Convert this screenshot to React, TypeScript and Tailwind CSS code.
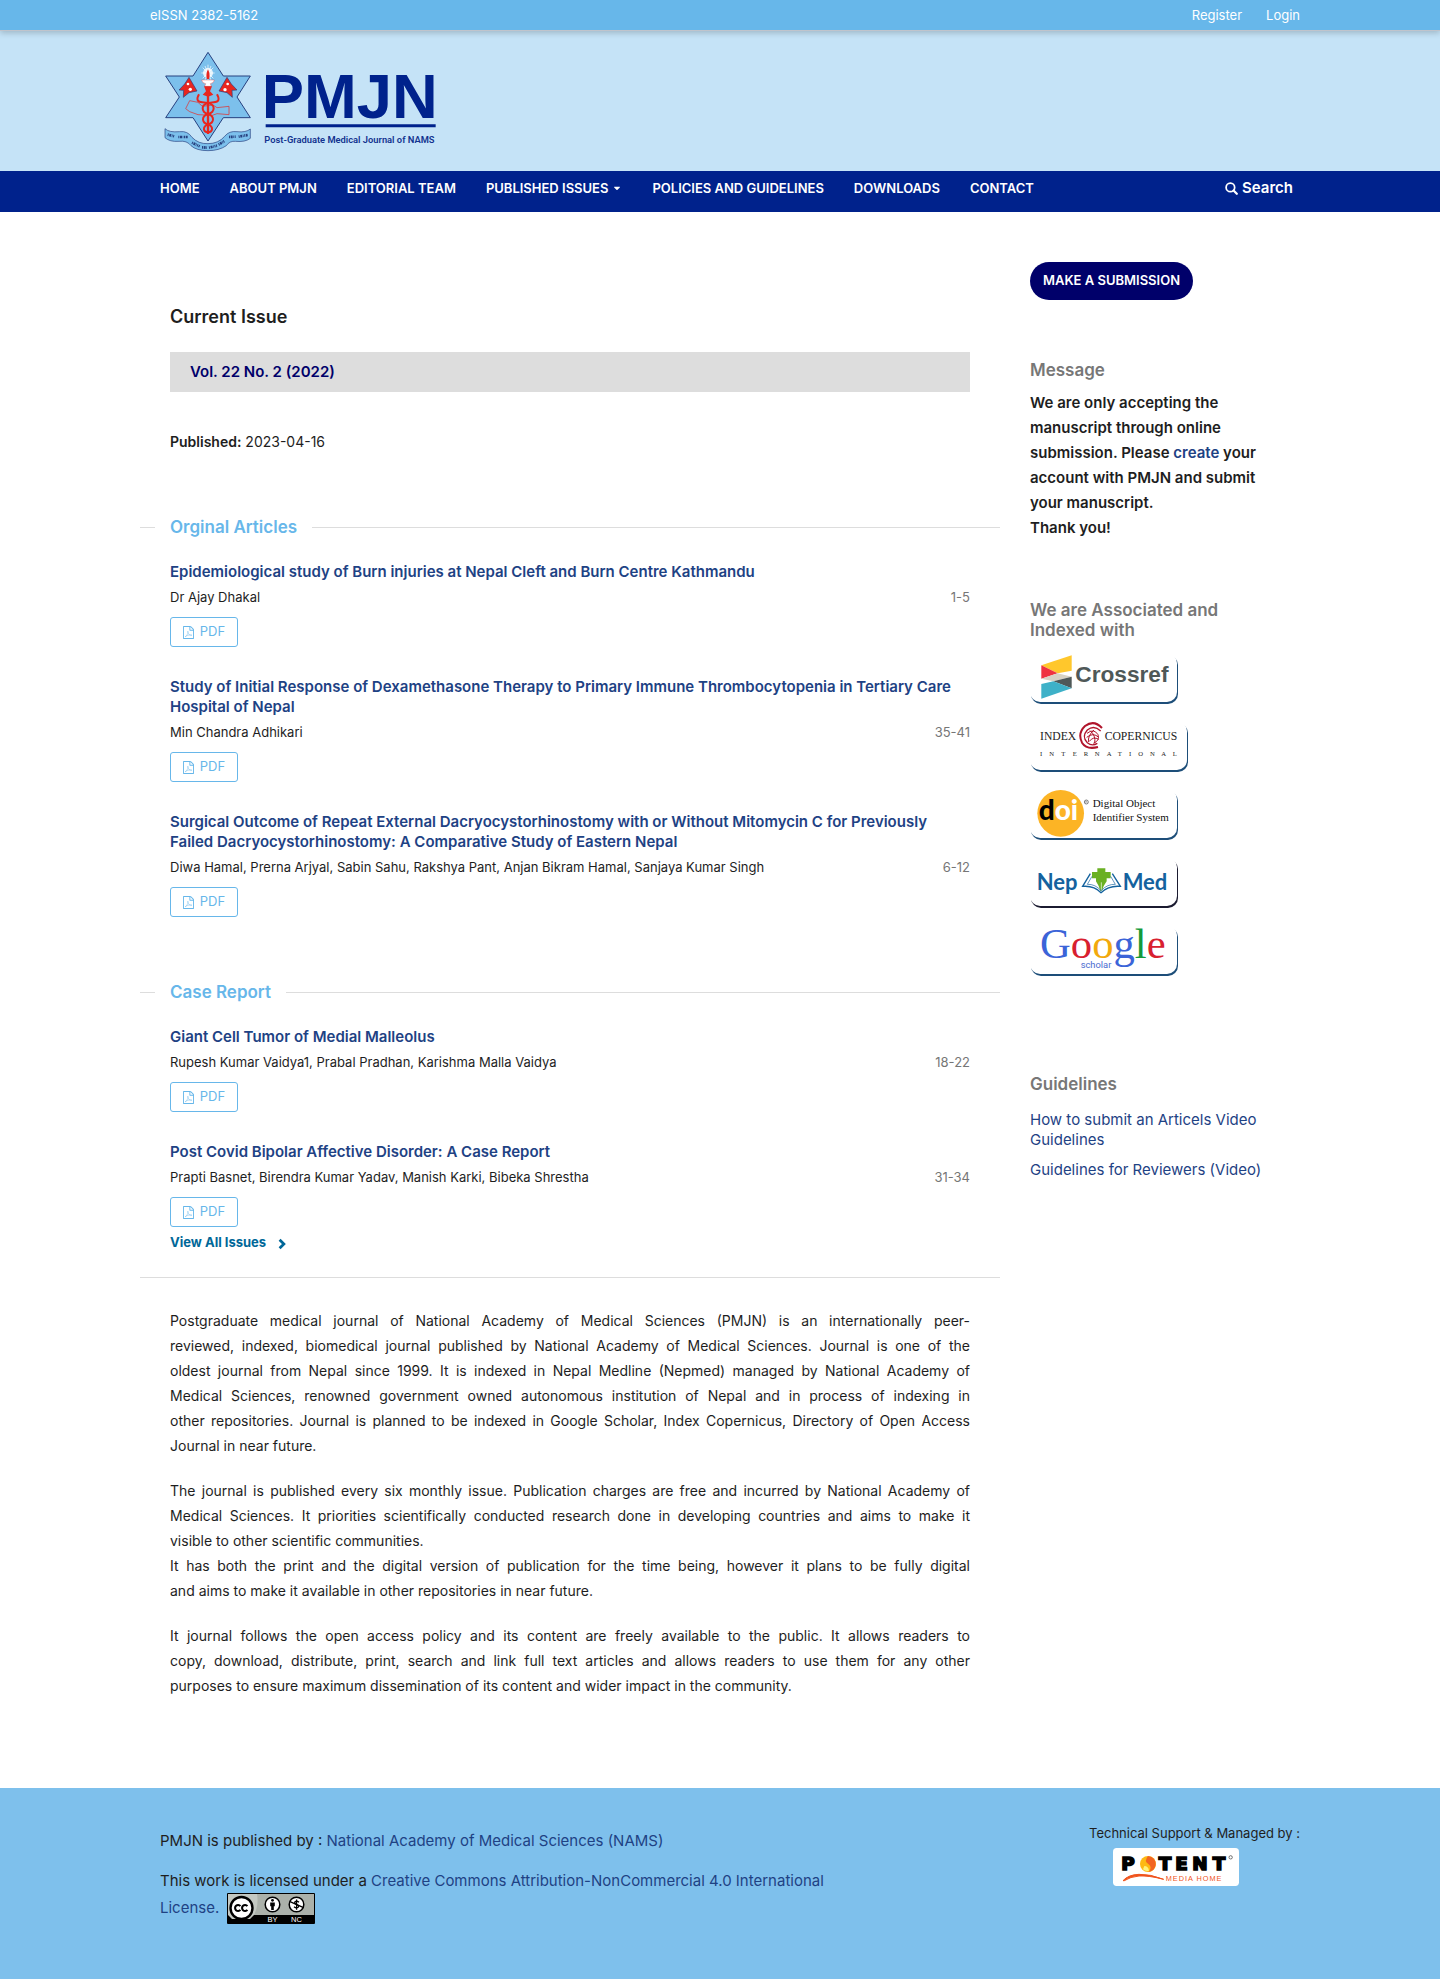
import React from "react";
import { FaCaretDown } from "react-icons/fa";

const navItems = [
  "Home",
  "About PMJN",
  "Editorial Team",
  "Published Issues",
  "Policies and Guidelines",
  "Downloads",
  "Contact",
];

type Article = { title: string; authors: string; pages: string };

const originals: Article[] = [
  {
    title: "Epidemiological study of Burn injuries at Nepal Cleft and Burn Centre Kathmandu",
    authors: "Dr Ajay Dhakal",
    pages: "1-5",
  },
  {
    title:
      "Study of Initial Response of Dexamethasone Therapy to Primary Immune Thrombocytopenia in Tertiary Care Hospital of Nepal",
    authors: "Min Chandra Adhikari",
    pages: "35-41",
  },
  {
    title:
      "Surgical Outcome of Repeat External Dacryocystorhinostomy with or Without Mitomycin C for Previously Failed Dacryocystorhinostomy: A Comparative Study of Eastern Nepal",
    authors:
      "Diwa Hamal, Prerna Arjyal, Sabin Sahu, Rakshya Pant, Anjan Bikram Hamal, Sanjaya Kumar Singh",
    pages: "6-12",
  },
];

const cases: Article[] = [
  {
    title: "Giant Cell Tumor of Medial Malleolus",
    authors: "Rupesh Kumar Vaidya1, Prabal Pradhan, Karishma Malla Vaidya",
    pages: "18-22",
  },
  {
    title: "Post Covid Bipolar Affective Disorder: A Case Report",
    authors: "Prapti Basnet, Birendra Kumar Yadav, Manish Karki, Bibeka Shrestha",
    pages: "31-34",
  },
];

const about: string[][] = [
  [
    "Postgraduate medical journal of National Academy of Medical Sciences (PMJN) is an internationally peer-",
    "reviewed, indexed, biomedical journal published by National Academy of Medical Sciences. Journal is one of the",
    "oldest journal from Nepal since 1999. It is indexed in Nepal Medline (Nepmed) managed by National Academy of",
    "Medical Sciences, renowned government owned autonomous institution of Nepal and in process of indexing in",
    "other repositories. Journal is planned to be indexed in Google Scholar, Index Copernicus, Directory of Open Access",
    "Journal in near future.",
  ],
  [
    "The journal is published every six monthly issue. Publication charges are free and incurred by National Academy of",
    "Medical Sciences. It priorities scientifically conducted research done in developing countries and aims to make it",
    "visible to other scientific communities.",
  ],
  [
    "It has both the print and the digital version of publication for the time being, however it plans to be fully digital",
    "and aims to make it available in other repositories in near future.",
  ],
  [
    "It journal follows the open access policy and its content are freely available to the public. It allows readers to",
    "copy, download, distribute, print, search and link full text articles and allows readers to use them for any other",
    "purposes to ensure maximum dissemination of its content and wider impact in the community.",
  ],
];

function SearchIcon() {
  return (
    <svg viewBox="0 0 14 14" className="size-[13px]" fill="none" stroke="currentColor" aria-hidden="true">
      <circle cx="5.8" cy="5.8" r="4.6" strokeWidth="1.9" />
      <path d="M9.2 9.2L12.7 12.7" strokeWidth="2.4" strokeLinecap="round" />
    </svg>
  );
}

function PdfIcon() {
  return (
    <svg viewBox="0 0 1536 1792" className="h-[13px] w-[11px]" fill="currentColor" aria-hidden="true">
      <path d="M1468 380q28 28 48 76t20 88v1152q0 40-28 68t-68 28H96q-40 0-68-28t-28-68V96q0-40 28-68T96 0h896q40 0 88 20t76 48zm-444-244v376h376q-10-29-22-41l-313-313q-12-12-41-22zm384 1528V640H992q-40 0-68-28t-28-68V128H128v1536h1280z" />
      <path
        d="M290 1500Q520 1380 660 1060Q740 860 690 700Q620 760 700 960Q800 1220 1020 1280Q1180 1330 1260 1270Q1160 1180 860 1240Q560 1290 290 1500Z"
        fill="none"
        stroke="currentColor"
        strokeWidth="60"
      />
    </svg>
  );
}

function ChevronIcon() {
  return (
    <svg viewBox="0 0 10 14" className="mt-1 h-3 w-2" fill="none" stroke="currentColor" aria-hidden="true">
      <path d="M2 1.6L7.4 7L2 12.4" strokeWidth="3.4" />
    </svg>
  );
}

function JournalLogo() {
  return (
    <svg viewBox="100 150 825 309" className="h-[103px] w-[275px]" role="img" aria-label="PMJN">
      <path
        d="M235 157L281 228H362L322 291L362 353H281L235 423L190 353H108L149 291L108 228H190Z"
        fill="#7cc0ec"
        stroke="#27407f"
        strokeWidth="3"
      />
      <circle cx="235" cy="219" r="15" fill="#fff" opacity="0.8" />
      <path
        d="M235 194V244M215 219H255M219 203L251 235M251 203L219 235M226 198L244 240M244 198L226 240"
        stroke="#fff"
        strokeWidth="2"
      />
      <path d="M235 208Q243 224 238 237H232Q227 224 235 208Z" fill="#e8261f" />
      <path d="M216 240H254Q252 250 242 251L245 259H225L228 251Q218 250 216 240Z" fill="#fff" stroke="#e8261f" strokeWidth="1" />
      <path
        d="M168 326L180 302L205 307L218 319L250 315L262 323L298 319V344L262 341L248 346L205 344L180 335Z"
        fill="none"
        stroke="#e8261f"
        strokeWidth="2"
      />
      <path d="M178 232L202 273L178 278L161 292L162 271L148 270L165 252Z" fill="#e8261f" stroke="#27407f" strokeWidth="2" />
      <path d="M292 232L268 273L292 278L308 292L307 271L322 270L305 252Z" fill="#e8261f" stroke="#27407f" strokeWidth="2" />
      <circle cx="175" cy="252" r="4" fill="#fff" />
      <circle cx="182" cy="268" r="5" fill="#fff" />
      <circle cx="294" cy="252" r="4" fill="#fff" />
      <circle cx="286" cy="269" r="5" fill="#fff" />
      <path d="M223 259H247L241 274L251 284L235 290L219 284L229 274Z" fill="#e8261f" />
      <path d="M235 280V402" stroke="#e8261f" strokeWidth="7" />
      <path
        d="M208 283Q195 306 218 307Q252 309 252 324Q252 338 235 342Q220 347 220 358Q220 370 235 373Q248 378 247 388Q246 396 235 397"
        fill="none"
        stroke="#e8261f"
        strokeWidth="6"
      />
      <path
        d="M262 283Q275 306 252 307Q219 309 219 324Q219 338 235 342Q250 347 250 358Q250 370 235 373Q222 378 223 388Q224 396 235 397"
        fill="none"
        stroke="#e8261f"
        strokeWidth="6"
      />
      <path
        d="M106 386Q118 398 150 395Q174 392 187 412Q206 432 235 431Q266 431 285 409Q298 392 322 395Q349 398 362 387V415Q346 427 318 424Q300 422 290 437Q268 452 235 452Q200 452 184 437Q172 421 148 424Q120 426 106 413Z"
        fill="#7cc0ec"
        stroke="#27407f"
        strokeWidth="2"
      />
      <path
        d="M114 404L134 409M146 411L176 411M187 428L210 439M217 442L232 443M238 443L262 437M267 434L284 423M298 411L318 410M327 410L354 405"
        fill="none"
        stroke="#27407f"
        strokeWidth="8"
        strokeDasharray="3 2 6 2 2 2"
      />
      <text
        x="396"
        y="353"
        fontSize="190"
        fontWeight="700"
        fontFamily="'Liberation Sans', sans-serif"
        fill="#00228c"
      >
        PMJN
      </text>
      <path d="M408 377H918" stroke="#00228c" strokeWidth="9" />
      <text
        x="404"
        y="429"
        fontSize="28"
        fontWeight="600"
        fontFamily="Roboto, sans-serif"
        fill="#12338f"
      >
        Post-Graduate Medical Journal of NAMS
      </text>
    </svg>
  );
}

function PublicationList({ heading, items }: { heading: string; items: Article[] }) {
  return (
    <section className="pb-11">
      <div className="flex h-5 items-center">
        <span className="h-px w-[15px] bg-[#dddddd]" />
        <h3 className="px-[15px] text-[17px] leading-5 font-semibold text-[#67b7ea]">{heading}</h3>
        <span className="h-px grow bg-[#dddddd]" />
      </div>
      <ul className="flex flex-col gap-[30px] px-[30px] pt-[25px]">
        {items.map((a) => (
          <li key={a.title}>
            <h4 className="text-[15px] leading-5 font-semibold text-[#1e4284]">
              <a href="#article">{a.title}</a>
            </h4>
            <div className="flex justify-between pt-[5px] text-[13px] leading-5">
              <span>{a.authors}</span>
              <span className="text-[#767676]">{a.pages}</span>
            </div>
            <a
              href="#pdf"
              className="mt-2.5 flex h-[30px] w-[68px] items-center justify-center gap-1.5 rounded-[3px] border border-[#67b7ea] text-[13px] text-[#67b7ea]"
            >
              <PdfIcon />
              PDF
            </a>
          </li>
        ))}
      </ul>
    </section>
  );
}

function Crossref() {
  return (
    <svg viewBox="60 37 441 147" className="h-[49px] w-[147px]" role="img" aria-label="Crossref">
      <path d="M94 74L185 44V90L143 98Z" fill="#ffc72c" />
      <path d="M94 74L143 98L94 114Z" fill="#ef3340" />
      <path d="M94 114L143 98L185 108L130 122Z" fill="#d8d2c4" />
      <path d="M185 108V143L130 122Z" fill="#4f5858" />
      <path d="M94 130L130 122L185 143L94 174Z" fill="#3eb1c8" />
      <text x="196" y="125" fontSize="68" fontWeight="700" fontFamily="'Liberation Sans', sans-serif" fill="#4f5858">
        Crossref
      </text>
    </svg>
  );
}

function IndexCopernicus() {
  return (
    <svg viewBox="60 241 471 147" className="h-[49px] w-[157px]" role="img" aria-label="Index Copernicus International">
      <g fontFamily="'Liberation Serif', serif" fill="#222">
        <text x="90" y="297" fontSize="35">INDEX</text>
        <text x="284" y="297" fontSize="35">COPERNICUS</text>
        <text x="90 118 154 188 221 254 290 323 357 385 420 454 488" y="345" fontSize="20">
          INTERNATIONAL
        </text>
      </g>
      <g fill="none" stroke="#b0142b">
        <path d="M276 262Q252 236 225 256Q202 278 216 306Q230 328 264 319" strokeWidth="6" />
        <path d="M272 271Q252 252 232 268Q214 288 232 306Q246 318 262 308" strokeWidth="4" />
        <path d="M231 278Q252 262 264 282Q270 300 250 308M230 290Q250 274 266 290M238 302Q250 286 266 296M240 270Q258 284 254 308M252 268Q232 286 236 304" strokeWidth="3" />
      </g>
    </svg>
  );
}

function Doi() {
  return (
    <svg viewBox="60 446 441 147" className="h-[49px] w-[147px]" role="img" aria-label="DOI">
      <circle cx="152" cy="519" r="70" fill="#fcb425" />
      <text x="86" y="539" fontSize="84" fontWeight="900" fontFamily="Lato, sans-serif" fill="#000">
        d<tspan fill="#fff">oi</tspan>
      </text>
      <circle cx="229" cy="485" r="6" fill="none" stroke="#444" strokeWidth="2" />
      <path d="M227 489V482H230V485L232 489" fill="none" stroke="#444" strokeWidth="1" />
      <g fontFamily="'Liberation Serif', serif" fontSize="33" fill="#111">
        <text x="248" y="500">Digital Object</text>
        <text x="248" y="543">Identifier System</text>
      </g>
    </svg>
  );
}

function NepMed() {
  return (
    <svg viewBox="60 170 441 147" className="h-[49px] w-[147px]" role="img" aria-label="NepMed">
      <g fontFamily="Lato, sans-serif" fontSize="66" fontWeight="700" fill="#14629e">
        <text x="80" y="269">Nep</text>
        <text x="338" y="269">Med</text>
      </g>
      <path d="M262 204H286V215H302V234H290V243L281 257L276 272H271L266 257L258 243V234H246V215H262Z" fill="#6ab023" />
      <path d="M274 246V272" stroke="#fff" strokeWidth="2" />
      <path d="M241 220L218 258Q252 255 273 277Q296 255 331 258L307 220" fill="none" stroke="#14629e" strokeWidth="4" />
      <path d="M246 228L232 252Q256 251 273 271Q292 251 316 252L302 228" fill="none" stroke="#14629e" strokeWidth="2" />
    </svg>
  );
}

function GoogleScholar() {
  return (
    <svg viewBox="60 374 441 147" className="h-[49px] w-[147px] overflow-visible" role="img" aria-label="Google Scholar">
      <text x="90" y="473" fontSize="128" fontFamily="'Liberation Serif', serif" fill="#3b64d8">
        G<tspan fill="#d8202f">o</tspan>
        <tspan fill="#f2a90c">o</tspan>
        <tspan fill="#3b64d8">g</tspan>
        <tspan fill="#129a3a">l</tspan>
        <tspan fill="#d8202f">e</tspan>
      </text>
      <text x="212" y="504" fontSize="28" fontFamily="Roboto, sans-serif" fill="#4a6bd0">
        scholar
      </text>
    </svg>
  );
}

function CcBadge() {
  return (
    <svg viewBox="0 0 88 31" className="ml-2 inline-block h-[31px] w-[88px] align-middle" role="img" aria-label="CC BY-NC">
      <rect width="88" height="31" rx="1" fill="#000" />
      <rect x="1" y="1" width="86" height="21" fill="#abb1aa" />
      <path d="M1 22V1H30Q32 12 27 22L23 26H5L1 22Z" fill="#c3c8c2" />
      <circle cx="14.5" cy="15" r="11" fill="#fff" stroke="#000" strokeWidth="2.4" />
      <path
        d="M13.4 13.1A3 3 0 1 0 13.4 16.9M20.4 13.1A3 3 0 1 0 20.4 16.9"
        fill="none"
        stroke="#000"
        strokeWidth="2.1"
      />
      <circle cx="45.5" cy="11.5" r="7.3" fill="#fff" stroke="#000" strokeWidth="1.5" />
      <circle cx="45.5" cy="7.3" r="1.4" />
      <path d="M43.2 9.4H47.8V13.2H46.8V17H44.2V13.2H43.2Z" />
      <circle cx="69.5" cy="11.5" r="7.3" fill="#fff" stroke="#000" strokeWidth="1.5" />
      <path
        d="M72 9.2Q69.5 7.3 67.8 9Q67.3 10.8 69.8 11.5Q72.5 12.6 71.2 14.2Q69.3 15.6 67 13.8M69.6 6.4V16.8"
        fill="none"
        stroke="#000"
        strokeWidth="1.3"
      />
      <path d="M63 8.6L76 14.4" stroke="#000" strokeWidth="1.3" />
      <g fontFamily="'Liberation Sans', sans-serif" fontSize="7.5" fill="#fff">
        <text x="40.5" y="29">BY</text>
        <text x="64" y="29">NC</text>
      </g>
    </svg>
  );
}

function PotentLogo() {
  return (
    <svg viewBox="156 204 378 114" className="h-[38px] w-[126px]" role="img" aria-label="Potent Media Home">
      <rect x="156" y="204" width="378" height="114" rx="11" fill="#fff" />
      <g fontFamily="'DejaVu Sans', sans-serif" fontWeight="700" fontSize="55" stroke="#000" strokeWidth="5">
        <text x="181" y="270">P</text>
        <text x="293 343 394 455" y="270">TENT</text>
      </g>
      <circle cx="261" cy="252" r="24" fill="#fdb913" />
      <path d="M261 228Q286 232 284 256Q280 274 262 276Q276 262 262 252Q248 244 261 228Z" fill="#f26522" />
      <path d="M250 258Q262 258 264 272Q254 276 246 268Z" fill="#fff27a" />
      <circle cx="509" cy="232" r="5" fill="none" stroke="#333" strokeWidth="2" />
      <path d="M186 302Q202 284 234 283Q268 282 308 298Q262 286 234 288Q208 290 190 302Z" fill="#f0531c" stroke="#f0531c" strokeWidth="3" />
      <text x="314" y="302" fontSize="22" fontFamily="'Liberation Sans', sans-serif" fill="#f0531c" letterSpacing="3">
        MEDIA HOME
      </text>
    </svg>
  );
}

export default function App() {
  return (
    <div className="bg-white font-[Inter,sans-serif] text-[15px] text-[#1e1e1e]">
      <div className="relative border-b border-[#c0c4cc] bg-[#67b7ea] text-[13px] leading-[30px] text-white shadow-[0_2px_6px_rgba(0,0,0,0.2)]">
        <div className="mx-auto flex max-w-[1160px] justify-between pl-2.5">
          <span>eISSN 2382-5162</span>
          <nav className="flex gap-6" aria-label="User">
            <a href="#register">Register</a>
            <a href="#login">Login</a>
          </nav>
        </div>
      </div>

      <header>
        <div className="bg-[#c5e3f7]">
          <div className="mx-auto max-w-[1160px] px-[23px] pt-[19px] pb-[18px]">
            <a href="#home" className="block w-fit">
              <JournalLogo />
            </a>
          </div>
        </div>
        <div className="bg-[#00228c] text-white">
          <div className="mx-auto flex h-[41px] max-w-[1160px] items-start justify-between pt-[7px] pr-[7px] pl-5">
            <nav className="flex gap-[30px] text-[13px] leading-5 font-semibold uppercase" aria-label="Site">
              {navItems.map((n) => (
                <a key={n} href="#nav" className="flex items-center gap-1">
                  {n}
                  {n === "Published Issues" && <FaCaretDown className="size-2.5" />}
                </a>
              ))}
            </nav>
            <a href="#search" className="flex items-center gap-1 text-[15px] leading-5 font-semibold">
              <SearchIcon />
              Search
            </a>
          </div>
        </div>
      </header>

      <div className="mx-auto flex max-w-[1160px]">
        <main className="min-w-0 grow pb-[90px]">
          <div className="px-[30px] pt-[90px]">
            <h2 className="text-lg leading-[30px] font-semibold">Current Issue</h2>
            <div className="mt-5 bg-[#dddddd] px-5 leading-10 font-semibold text-[#00006a]">
              Vol. 22 No. 2 (2022)
            </div>
            <p className="mt-[37px] text-sm leading-[25px]">
              <span className="font-semibold">Published:</span> 2023-04-16
            </p>
          </div>
          <div className="pt-[63px]">
            <PublicationList heading="Orginal Articles" items={originals} />
          </div>
          <div className="pt-[21px]">
            <PublicationList heading="Case Report" items={cases} />
          </div>
          <a
            href="#archive"
            className="-mt-11 ml-[30px] flex w-fit items-center gap-3 pt-[5px] text-[13px] leading-5 font-bold text-[#006798]"
          >
            View All Issues
            <ChevronIcon />
          </a>
          <hr className="mt-[25px] border-[#dddddd]" />
          <div className="px-[30px] pt-[30px] text-sm leading-[25px]">
            {about.map((lines, i) => (
              <p key={lines[0]} className={i === 0 || i === 2 ? "" : "pt-5"}>
                {lines.map((line, j) => (
                  <span
                    key={line}
                    className={
                      j < lines.length - 1 ? "block text-justify [text-align-last:justify]" : "block"
                    }
                  >
                    {line}{" "}
                  </span>
                ))}
              </p>
            ))}
          </div>
        </main>

        <aside className="w-[300px] shrink-0 px-[30px] pt-[50px]">
          <a
            href="#submit"
            className="flex h-[38px] w-[163px] items-center justify-center rounded-[20px] bg-[#00006a] text-[13px] font-semibold text-white"
          >
            MAKE A SUBMISSION
          </a>
          <section className="pt-[60px]">
            <h3 className="text-[17px] leading-5 font-semibold text-[#777777]">Message</h3>
            <p className="pt-2.5 leading-[25px] font-semibold">
              We are only accepting the
              <br />
              manuscript through online
              <br />
              submission. Please{" "}
              <a href="#create" className="text-[#1e4284]">
                create
              </a>{" "}
              your
              <br />
              account with PMJN and submit
              <br />
              your manuscript.
              <br />
              Thank you!
            </p>
          </section>
          <section className="pt-[60px]">
            <h3 className="text-[17px] leading-5 font-semibold text-[#777777]">
              We are Associated and
              <br />
              Indexed with
            </h3>
            <div className="flex flex-col gap-[19px] pt-[13px]">
              <a href="#crossref" className="w-fit rounded-[10px] shadow-[1px_2px_0_#1d4e79]">
                <Crossref />
              </a>
              <a href="#copernicus" className="w-fit rounded-[10px] shadow-[1px_2px_0_#1d4e79]">
                <IndexCopernicus />
              </a>
              <a href="#doi" className="w-fit rounded-[10px] shadow-[1px_2px_0_#1d4e79]">
                <Doi />
              </a>
              <a href="#nepmed" className="w-fit rounded-[10px] shadow-[1px_2px_0_#1b1b30]">
                <NepMed />
              </a>
              <a href="#scholar" className="w-fit rounded-[10px] shadow-[1px_2px_0_#1d4e79]">
                <GoogleScholar />
              </a>
            </div>
          </section>
          <section className="pt-[100px]">
            <h3 className="text-[17px] leading-5 font-semibold text-[#777777]">Guidelines</h3>
            <ul className="flex flex-col gap-2.5 pt-4 leading-5 text-[#1e4284]">
              <li>
                <a href="#authors">
                  How to submit an Articels Video
                  <br />
                  Guidelines
                </a>
              </li>
              <li>
                <a href="#reviewers">Guidelines for Reviewers (Video)</a>
              </li>
            </ul>
          </section>
        </aside>
      </div>

      <footer className="bg-[#7ec0ec]">
        <div className="mx-auto flex min-h-[191px] max-w-[1160px] justify-between pb-10 pl-5">
          <div className="pt-10 leading-[25px]">
            <p>
              PMJN is published by :{" "}
              <a href="#nams" className="text-[#1e4284]">
                National Academy of Medical Sciences (NAMS)
              </a>
            </p>
            <p className="pt-[15px]">
              This work is licensed under a{" "}
              <a href="#license" className="text-[#1e4284]">
                Creative Commons Attribution-NonCommercial 4.0 International
                <br />
                License.
                <CcBadge />
              </a>
            </p>
          </div>
          <div className="pt-[35px] text-[13px] leading-5">
            <p>Technical Support &amp; Managed by :</p>
            <a href="#potent" className="ml-6 mt-[5px] block w-fit">
              <PotentLogo />
            </a>
          </div>
        </div>
      </footer>
    </div>
  );
}
